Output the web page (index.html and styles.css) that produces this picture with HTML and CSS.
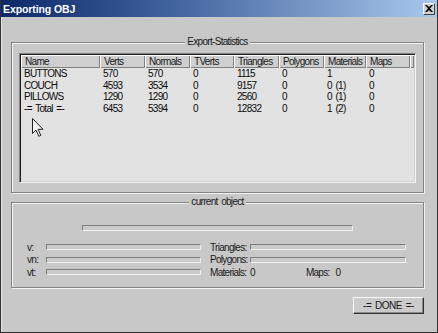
FILE: index.html
```html
<!DOCTYPE html>
<html>
<head>
<meta charset="utf-8">
<link rel="stylesheet" href="styles.css">
</head>
<body>
<div class="window">
  <div class="titlebar">
    <span class="title">Exporting OBJ</span>
    <span class="close">
      <svg width="8" height="7" viewBox="0 0 8 7"><path d="M0 0h2l2 2 2-2h2L5 3.5 8 7H6L4 5 2 7H0l3-3.5z" fill="#000"/></svg>
    </span>
  </div>
  <div class="client">
    <div class="group stats">
      <div class="legend">Export-Statistics</div>
      <div class="listview">
        <div class="lv-header">
          <div class="hcell">Name</div>
          <div class="hcell">Verts</div>
          <div class="hcell">Normals</div>
          <div class="hcell">TVerts</div>
          <div class="hcell">Triangles</div>
          <div class="hcell">Polygons</div>
          <div class="hcell">Materials</div>
          <div class="hcell">Maps</div>
          <div class="hcell blank"></div>
        </div>
        <div class="lv-body">
          <div class="row"><span>BUTTONS</span><span>570</span><span>570</span><span>0</span><span>1115</span><span>0</span><span>1</span><span>0</span></div>
          <div class="row"><span>COUCH</span><span>4593</span><span>3534</span><span>0</span><span>9157</span><span>0</span><span>0 (1)</span><span>0</span></div>
          <div class="row"><span>PILLOWS</span><span>1290</span><span>1290</span><span>0</span><span>2560</span><span>0</span><span>0 (1)</span><span>0</span></div>
          <div class="row"><span>-= Total =-</span><span>6453</span><span>5394</span><span>0</span><span>12832</span><span>0</span><span>1 (2)</span><span>0</span></div>
        </div>
        <svg class="cursor" width="13" height="20" viewBox="0 0 13 20">
          <path d="M0.5 0.5 L0.5 15.5 L4 12 L6.8 18.3 L8.8 17.4 L6.1 11.3 L11 11.3 Z" fill="#f4f4f4" stroke="#222" stroke-width="1" stroke-linejoin="miter"/>
        </svg>
      </div>
    </div>

    <div class="group current">
      <div class="legend">current object</div>
      <div class="bar topbar"></div>
      <div class="fields">
        <span class="lbl">v:</span><div class="bar"></div><span class="lbl2">Triangles:</span><div class="bar"></div>
        <span class="lbl">vn:</span><div class="bar"></div><span class="lbl2">Polygons:</span><div class="bar"></div>
        <span class="lbl">vt:</span><div class="bar"></div><span class="lbl2">Materials:</span><div class="matmaps"><span>0</span><span class="maps">Maps:</span><span>0</span></div>
      </div>
    </div>

    <div class="footer">
      <button class="btn">-= DONE =-</button>
    </div>
  </div>
</div>
</body>
</html>
```

FILE: styles.css
```css
html, body {
  margin: 0;
  padding: 0;
  background: #c8c8c8;
}

body {
  font-family: "Liberation Sans", Arial, sans-serif;
  font-size: 10px;
  letter-spacing: -0.7px;
  word-spacing: 1.5px;
  color: #0a0a0a;
}

.window {
  width: 438px;
  height: 333px;
  box-sizing: border-box;
  border: 1px solid #303030;
  border-top: 0;
  background: #c8c8c8;
  display: flex;
  flex-direction: column;
  box-shadow: inset 1px 0 0 #e8e8e8;
}

.titlebar {
  height: 17px;
  flex: none;
  display: flex;
  align-items: center;
  justify-content: space-between;
  background: linear-gradient(to right, #0c2868 0%, #3a5c98 35%, #a8c8ec 100%);
  padding-left: 2px;
}

.title {
  font-weight: bold;
  font-size: 10.5px;
  letter-spacing: -0.1px;
  word-spacing: 0;
  color: #fff;
}

.close {
  width: 12px;
  height: 12px;
  box-sizing: border-box;
  margin-right: 2px;
  background: #d0d0d0;
  border: 1px solid;
  border-color: #fff #404040 #404040 #fff;
  display: flex;
  align-items: center;
  justify-content: center;
}

.client {
  flex: 1;
  display: flex;
  flex-direction: column;
  padding: 25px 13px 0 10px;
}

.group {
  border: 1px solid #848484;
  box-shadow: inset 1px 1px 0 #f2f2f2, 1px 1px 0 #f2f2f2;
  display: flex;
  flex-direction: column;
}

.legend {
  align-self: center;
  height: 12px;
  line-height: 12px;
  margin: -7px 0 -5px;
  padding: 0 2px;
  background: #c8c8c8;
  color: #1a1a1a;
}

.stats {
  height: 151px;
  box-sizing: border-box;
  padding: 0 7px 9px 7px;
}

.stats .legend {
  margin-bottom: 5px;
}

.listview {
  position: relative;
  flex: 1;
  background: #e2e2e2;
  border: 1px solid;
  border-color: #808080 #f4f4f4 #f4f4f4 #808080;
  box-shadow: inset 1px 1px 0 #202020, inset -1px -1px 0 #d0d0d0;
  padding: 1px;
}

.lv-header {
  display: grid;
  grid-template-columns: 79px 45px 45px 44px 45px 45px 42px 44px 1fr;
  height: 13px;
}

.hcell {
  background: #cfcfcf;
  box-shadow: inset 1px 1px 0 #fafafa, inset -1px -1px 0 #808080;
  line-height: 13px;
  padding-left: 4px;
  color: #1a1a1a;
  white-space: nowrap;
  overflow: hidden;
}

.row {
  display: grid;
  grid-template-columns: 79px 45px 45px 44px 45px 45px 42px 44px;
  height: 11.7px;
  line-height: 12px;
}

.row span {
  padding-left: 3px;
  white-space: nowrap;
}

.cursor {
  position: absolute;
  left: 12px;
  top: 64px;
}

.current {
  height: 86px;
  box-sizing: border-box;
  margin-top: 9px;
}

.bar {
  height: 6px;
  box-sizing: border-box;
  border: 1px solid;
  border-color: #7c7c7c #f0f0f0 #f0f0f0 #7c7c7c;
  background: #cacaca;
}

.topbar {
  margin: 22px 0 0 70px;
  width: 271px;
}

.fields {
  margin: 10px 0 0 15px;
  display: grid;
  grid-template-columns: 19px 155px 9px 40px 156px;
  grid-auto-rows: 12.5px;
  align-items: center;
  color: #1a1a1a;
}

.lbl {
  grid-column: 1;
}

.lbl2 {
  grid-column: 4;
  white-space: nowrap;
}

.matmaps {
  grid-column: 5;
  display: flex;
}

.maps {
  margin-left: 51px;
  margin-right: 6px;
}

.footer {
  display: flex;
  justify-content: flex-end;
  margin-top: 9px;
}

.btn {
  width: 71px;
  height: 17px;
  padding: 0;
  font-family: "Liberation Sans", Arial, sans-serif;
  font-size: 10px;
  letter-spacing: -0.5px;
  word-spacing: 1.5px;
  color: #1a1a1a;
  background: #cbcbcb;
  border: 1px solid;
  border-color: #fafafa #303030 #303030 #fafafa;
  box-shadow: inset -1px -1px 0 #8a8a8a;
  border-radius: 0;
}
```
